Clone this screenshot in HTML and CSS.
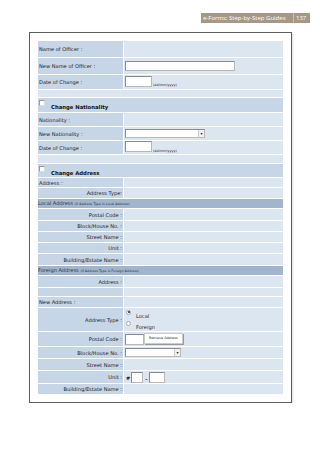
FILE: index.html
```html
<!DOCTYPE html>
<html lang="en">
<head>
    <meta charset="UTF-8">
    <meta name="viewport" content="width=device-width, initial-scale=1.0">
    <title>e-Forms: Step-by-Step Guides</title>
    <link rel="stylesheet" href="styles.css">
</head>
<body>
    <div class="topbar">
        <span class="guide">e-Forms: Step-by-Step Guides</span>
        <span class="page">137</span>
    </div>

    <div class="frame">
        <table class="form">
            <colgroup><col class="c1"><col class="c2"></colgroup>
            <tr class="h16"><td class="lbl">Name of Officer :</td><td class="val"></td></tr>
            <tr class="h16"><td class="lbl">New Name of Officer :</td><td class="val"><span class="txt name"></span></td></tr>
            <tr class="h14"><td class="lbl">Date of Change :</td><td class="val"><span class="txt date"></span><span class="hint">(dd/mm/yyyy)</span></td></tr>
            <tr class="h7"><td class="blank" colspan="2"></td></tr>

            <tr class="h14"><td class="sect" colspan="2"><div class="sect-in"><span class="check"></span><b>Change Nationality</b></div></td></tr>
            <tr class="h13"><td class="lbl">Nationality :</td><td class="val"></td></tr>
            <tr class="h13"><td class="lbl">New Nationality :</td><td class="val"><span class="sel nat"><span class="arrow">&#9662;</span></span></td></tr>
            <tr class="h13"><td class="lbl">Date of Change :</td><td class="val"><span class="txt date"></span><span class="hint">(dd/mm/yyyy)</span></td></tr>
            <tr class="h8"><td class="blank" colspan="2"></td></tr>

            <tr class="h13"><td class="sect" colspan="2"><div class="sect-in"><span class="check"></span><b>Change Address</b></div></td></tr>
            <tr class="h9"><td class="lbl">Address :</td><td class="val"></td></tr>
            <tr class="h10"><td class="lbl right">Address Type:</td><td class="val"></td></tr>
            <tr class="h9"><td class="head" colspan="2">Local Address <small>(If Address Type is Local Address)</small></td></tr>
            <tr class="h11"><td class="lbl right">Postal Code :</td><td class="val"></td></tr>
            <tr class="h10"><td class="lbl right">Block/House No. :</td><td class="val"></td></tr>
            <tr class="h10"><td class="lbl right">Street Name :</td><td class="val"></td></tr>
            <tr class="h10"><td class="lbl right">Unit :</td><td class="val"></td></tr>
            <tr class="h11"><td class="lbl right">Building/Estate Name :</td><td class="val"></td></tr>
            <tr class="h9"><td class="head" colspan="2">Foreign Address <small>(If Address Type is Foreign Address)</small></td></tr>
            <tr class="h11"><td class="lbl right">Address :</td><td class="val"></td></tr>
            <tr class="h8"><td class="lbl"></td><td class="val"></td></tr>

            <tr class="h10"><td class="lbl">New Address :</td><td class="val"></td></tr>
            <tr class="h23"><td class="lbl right">Address Type :</td><td class="val">
                <div class="opt"><span class="radio on"></span><span>Local</span></div>
                <div class="opt"><span class="radio"></span><span>Foreign</span></div>
            </td></tr>
            <tr class="h14"><td class="lbl right">Postal Code :</td><td class="val"><div class="line"><span class="txt postal"></span><span class="btn">Retrieve Address</span></div></td></tr>
            <tr class="h11"><td class="lbl right">Block/House No. :</td><td class="val"><span class="sel block"><span class="arrow">&#9662;</span></span></td></tr>
            <tr class="h11"><td class="lbl right">Street Name :</td><td class="val"></td></tr>
            <tr class="h12"><td class="lbl right">Unit :</td><td class="val"><div class="line"><span class="hash">#</span><span class="txt unit1"></span><span class="dash">-</span><span class="txt unit2"></span></div></td></tr>
            <tr class="h10"><td class="lbl right">Building/Estate Name :</td><td class="val"></td></tr>
        </table>
    </div>
</body>
</html>
```

FILE: styles.css
```css
body{
    margin: 0;
    background: #fff;
    font-family: "DejaVu Sans", Verdana, sans-serif;
}

/* page header */
.topbar{
    display: flex;
    justify-content: flex-end;
    padding: 13px 10px 0 0;
    font-family: "Open Sans", sans-serif;
    font-size: 6px;
    color: #fff;
}
.topbar span{
    background: #a69786;
    height: 10px;
    line-height: 10px;
}
.topbar .guide{
    padding: 0 4px 0 2px;
    width: 86px;
}
.topbar .page{
    border-left: 1px solid #c9beb2;
    padding: 0 4px 0 2px;
    width: 10px;
}

/* framed screenshot */
.frame{
    box-sizing: border-box;
    width: 263px;
    margin: 9px 0 0 29px;
    border: 1px solid #5e5e5e;
    padding: 7px;
    box-shadow: 1px 1px 2px rgba(0, 0, 0, 0.15);
}
.form{
    width: 247px;
    table-layout: fixed;
    border-collapse: separate;
    border-spacing: 1px;
    font-size: 5.1px;
    color: #222;
}
.form .c1{
    width: 85px;
}
.form td{
    padding: 0;
    vertical-align: middle;
    line-height: 6px;
    white-space: nowrap;
}
.h7{ height: 7px; }
.h8{ height: 8px; }
.h9{ height: 9px; }
.h10{ height: 10px; }
.h11{ height: 11px; }
.h12{ height: 12px; }
.h13{ height: 13px; }
.h14{ height: 14px; }
.h16{ height: 16px; }
.h23{ height: 23px; }

.form .lbl{
    background: #c6d6e6;
    padding-left: 1px;
}
.form .lbl.right{
    text-align: right;
    padding: 0 1px 0 0;
}
.form .val{
    background: #dce6f0;
    padding-left: 1px;
}
.form .blank{
    background: #dce6f0;
}
.form .sect{
    background: #c6d6e6;
    vertical-align: top;
}
.sect-in{
    display: flex;
    align-items: flex-end;
    height: 13px;
}
.sect-in b{
    font-size: 5.3px;
    color: #111;
    margin-left: 6px;
    padding-bottom: 1px;
}
.check{
    align-self: flex-start;
    width: 4px;
    height: 4px;
    margin: 2px 0 0 1px;
    background: #fff;
    border: 1px solid #999;
    border-right-color: #ddd;
    border-bottom-color: #ddd;
}
.form .head{
    background: #a1b6cd;
    padding-left: 0;
    color: #2f3540;
}
.head small{
    font-size: 3.3px;
}

/* inputs */
.txt, .sel, .btn{
    display: inline-block;
    box-sizing: border-box;
    background: #fff;
    border: 1px solid #b9b9b9;
    border-top-color: #8c8c8c;
    border-left-color: #8c8c8c;
    vertical-align: middle;
}
.txt.name{
    width: 110px;
    height: 10px;
}
.txt.date{
    width: 27px;
    height: 11px;
}
.hint{
    font-size: 3.4px;
    vertical-align: -4px;
    margin-left: 1px;
}
.sel{
    position: relative;
    height: 9px;
}
.sel.nat{
    width: 80px;
}
.sel.block{
    width: 56px;
}
.sel .arrow{
    position: absolute;
    right: 0;
    top: 0;
    width: 5px;
    height: 7px;
    font-size: 4px;
    line-height: 7px;
    text-align: center;
    color: #222;
    background: #f0f0f0;
    border-left: 1px solid #ccc;
}
.line{
    display: flex;
    align-items: center;
}
.txt.postal{
    width: 19px;
    height: 11px;
}
.btn{
    font-size: 3.4px;
    line-height: 9px;
    height: 11px;
    padding: 0 4px;
    margin-top: -2px;
    border-color: #ccc;
    box-shadow: 1px 1px 0 #999;
    color: #222;
}
.hash{
    font-weight: bold;
    font-size: 5px;
    color: #111;
    margin: 2px 1px 0 1px;
}
.txt.unit1{
    width: 12px;
    height: 11px;
}
.dash{
    margin: 3px 2px 0 2px;
    font-weight: bold;
}
.txt.unit2{
    width: 16px;
    height: 11px;
}

/* address type radios */
.opt{
    display: flex;
    align-items: flex-end;
    height: 11px;
}
.opt span:last-child{
    margin-left: 5px;
    padding-bottom: 1px;
}
.radio{
    align-self: flex-start;
    width: 3px;
    height: 3px;
    margin: 1px 0 0 1px;
    border-radius: 50%;
    border: 1px solid #aaa;
    background: #fff;
    position: relative;
}
.radio.on::after{
    content: "";
    position: absolute;
    left: 0.5px;
    top: 0.5px;
    width: 2px;
    height: 2px;
    border-radius: 50%;
    background: #222;
}
```
